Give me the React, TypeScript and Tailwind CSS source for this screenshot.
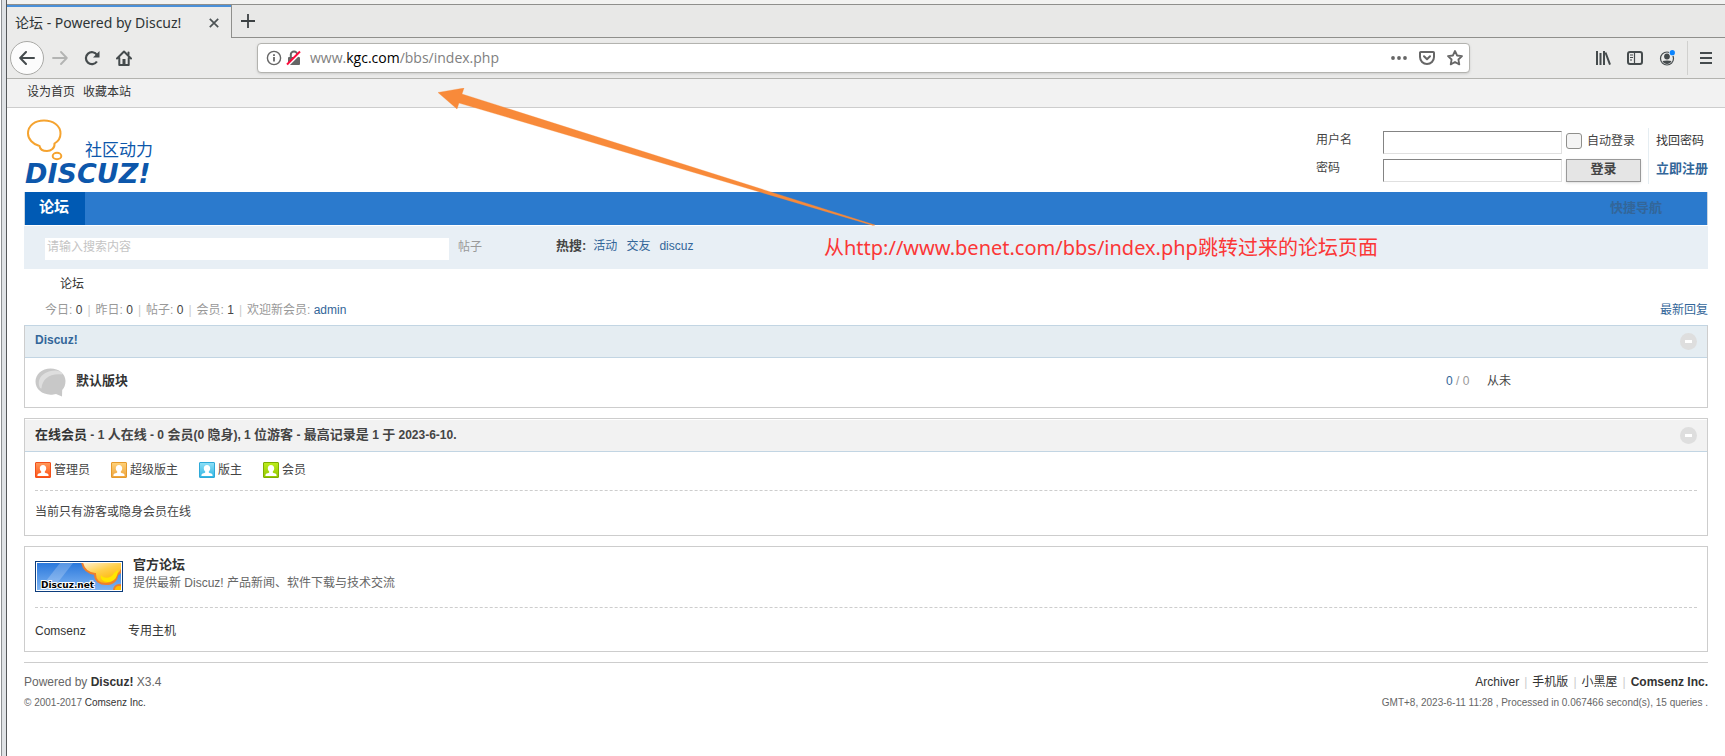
import { useState, type ReactNode } from "react";

const sans = "font-['Liberation_Sans','Noto_Sans_CJK_SC',sans-serif]";
const chrome = "font-['Noto_Sans','Noto_Sans_CJK_SC',sans-serif]";

function BrowserChrome() {
  return (
    <header className={`${chrome} text-[#2e3436]`}>
      <div className="h-1 bg-[#f2f2f1]" />
      <div className="flex h-[34px] border-t border-[#8f8f8c] bg-[#e8e8e7]">
        <div className="flex w-[225px] flex-col border-r border-[#8f8f8c] bg-[#ebebea]">
          <div className="h-[2px] bg-[#4a90d9]" />
          <div className="flex flex-1 items-center justify-between pr-3 pl-2">
            <span className="text-sm">论坛 - Powered by Discuz!</span>
            <button aria-label="Close tab" className="grid size-[10px] place-items-center">
              <svg width="10" height="10" viewBox="0 0 10 10" stroke="#4d5355" strokeWidth="1.7">
                <path d="M.8.8 9.2 9.2M9.2.8.8 9.2" />
              </svg>
            </button>
          </div>
        </div>
        <div className="flex flex-1 items-center border-b border-[#8f8f8c] pl-[9px]">
          <button aria-label="New tab">
            <svg width="14" height="14" viewBox="0 0 14 14" stroke="#3c4143" strokeWidth="1.8">
              <path d="M7 0v14M0 7h14" />
            </svg>
          </button>
        </div>
      </div>
      <div className="flex h-[41px] items-center border-b border-[#b3b3af] bg-[#ebebea] pl-[3px]">
        <button aria-label="Back" className="grid size-[34px] place-items-center rounded-full border border-[#a9a9a6] bg-[#fcfcfc]">
          <svg width="16" height="14" viewBox="0 0 16 14" fill="none" stroke="#454b4d" strokeWidth="2" strokeLinecap="round" strokeLinejoin="round">
            <path d="M15 7H1.5M7 1 1.2 7 7 13" />
          </svg>
        </button>
        <button aria-label="Forward" className="ml-2">
          <svg width="16" height="14" viewBox="0 0 16 14" fill="none" stroke="#b3b4b3" strokeWidth="1.8" strokeLinecap="round" strokeLinejoin="round">
            <path d="M1 7h13.5M9 1l5.8 6L9 13" />
          </svg>
        </button>
        <button aria-label="Reload" className="ml-4">
          <svg width="16" height="16" viewBox="0 0 16 16" fill="none" stroke="#454b4d" strokeWidth="2.2">
            <path d="M12.9 11.5A6 6 0 1 1 13 5" />
            <path d="M15.5 1v6.5H9Z" fill="#454b4d" stroke="none" />
          </svg>
        </button>
        <button aria-label="Home" className="ml-4">
          <svg width="16" height="16" viewBox="0 0 16 16" fill="none" stroke="#454b4d" strokeWidth="2" strokeLinejoin="round" strokeLinecap="round">
            <path d="M1 8.5 8 1.5l7 7M3.3 8v7h9.4V8" />
            <path d="M6.5 9h3v6h-3z" fill="#454b4d" stroke="none" />
            <path d="M12.5 2.5v2" />
          </svg>
        </button>
        <div className="ml-[125px] flex h-[30px] flex-1 items-center rounded border border-[#b3b3af] bg-white px-2 shadow-sm">
          <svg width="16" height="16" viewBox="0 0 16 16" fill="none" stroke="#666" strokeWidth="1.4" aria-hidden>
            <circle cx="8" cy="8" r="6.6" />
            <path d="M8 7v4.6M8 4.2v1.7" strokeWidth="1.8" />
          </svg>
          <svg width="16" height="16" viewBox="0 0 16 16" className="ml-1" aria-hidden>
            <path d="M4.8 7V4.6a3.2 3.2 0 0 1 6.4 0V7" fill="none" stroke="#666" strokeWidth="2" />
            <rect x="2" y="7" width="12" height="8" rx="1" fill="#666" />
            <path d="M2.5 15 15 2.5" stroke="#fff" strokeWidth="2" />
            <path d="M1 14.5 14 1.5" stroke="#ff0b3b" strokeWidth="2" />
          </svg>
          <p className="ml-2 flex-1 font-['Open_Sans',sans-serif] text-sm text-[#808080]">
            www.<span className="text-black">kgc.com</span>/bbs/index.php
          </p>
          <div className="flex items-center gap-3">
            <button aria-label="Page actions">
              <svg width="16" height="16" viewBox="0 0 16 16" fill="#666">
                <circle cx="2" cy="8" r="1.9" />
                <circle cx="8" cy="8" r="1.9" />
                <circle cx="14" cy="8" r="1.9" />
              </svg>
            </button>
            <button aria-label="Save to Pocket">
              <svg width="16" height="16" viewBox="0 0 16 16" fill="none" stroke="#666" strokeWidth="2" strokeLinecap="round" strokeLinejoin="round">
                <path d="M1.8 2h12.4a.8.8 0 0 1 .8.8V7a7 7 0 0 1-14 0V2.800a.8.8 0 0 1 .8-.8Z" />
                <path d="m5 6.300 3 3 3-3" />
              </svg>
            </button>
            <button aria-label="Bookmark this page" className="-mr-[2px]">
              <svg width="16" height="16" viewBox="0 0 16 16" fill="none" stroke="#666" strokeWidth="1.8" strokeLinejoin="round">
                <path d="m8 1 2.100 4.500 4.900.6-3.600 3.400.9 4.900L8 12l-4.300 2.400.9-4.900L1 6.100l4.900-.6Z" />
              </svg>
            </button>
          </div>
        </div>
        <div className="ml-[125px] flex items-center gap-4 pr-[11px]">
          <button aria-label="Library">
            <svg width="16" height="16" viewBox="0 0 16 16" fill="none" stroke="#454b4d" strokeWidth="2">
              <path d="M2 1v14M5.500 3v12M9 1v14M10.500 2.500l4.500 12.200" />
            </svg>
          </button>
          <button aria-label="Sidebars">
            <svg width="16" height="16" viewBox="0 0 16 16" fill="none" stroke="#454b4d">
              <rect x="1" y="2" width="14" height="12" rx="2" strokeWidth="2" />
              <path d="M7.500 2v12M3 5h3M3 7.500h3M3 10h2" strokeWidth="1.200" />
            </svg>
          </button>
          <button aria-label="Account">
            <svg width="16" height="16" viewBox="0 0 16 16">
              <circle cx="8" cy="8.500" r="6.500" fill="none" stroke="#454b4d" strokeWidth="1.200" />
              <circle cx="8" cy="6.500" r="2.900" fill="#454b4d" />
              <path d="M3.500 11c2.500-.8 6.500-.8 9 0-1 2.300-2.600 3-4.500 3s-3.500-.7-4.500-3Z" fill="#454b4d" />
              <circle cx="13.300" cy="2.700" r="3.300" fill="#ebebea" />
              <circle cx="13.300" cy="2.700" r="2.600" fill="#0a84ff" />
            </svg>
          </button>
          <div className="-ml-1 flex h-[34px] items-center border-l border-[#d0d0ce] pl-[10px]">
            <button aria-label="Open menu">
              <svg width="16" height="16" viewBox="0 0 16 16" stroke="#454b4d" strokeWidth="2">
                <path d="M2 3h12M2 8h12M2 13h12" />
              </svg>
            </button>
          </div>
        </div>
      </div>
    </header>
  );
}

function Logo() {
  return (
    <a href="#home" aria-label="Discuz!">
      <svg width="132" height="74" viewBox="0 0 132 74">
        <path
          d="M14.500 28C8 26.500 3 21 3 15.500 3 7.500 10 2.500 19 2.500S35.500 7.500 35.500 15.500c0 4-2.500 8-6 10 .5 4.500-3.500 7.500-7.500 7.500-4.500 0-7-2-7.500-5Z"
          fill="none"
          stroke="#f5a32f"
          strokeWidth="2"
        />
        <ellipse cx="32" cy="38" rx="4.300" ry="3.200" fill="none" stroke="#f5a32f" strokeWidth="2" />
        <text x="60" y="38" fontSize="17" fill="#0d57ab" fontFamily="'Noto Sans CJK SC', sans-serif">
          社区动力
        </text>
        <text x="0" y="65" fontSize="27" fontWeight="700" fontStyle="italic" fill="#0d57ab" fontFamily="'DejaVu Sans', sans-serif">
          DISCUZ!
        </text>
      </svg>
    </a>
  );
}

const inputClass = "h-[23px] w-[179px] border border-t-[#848484] border-r-[#e0e0e0] border-b-[#e0e0e0] border-l-[#848484] bg-white px-1 outline-none";

function LoginForm() {
  return (
    <form className="flex" onSubmit={(e) => e.preventDefault()}>
      <div className="grid grid-cols-[67px_179px_75px] content-start gap-y-[5px] pt-[3px]">
        <label htmlFor="user" className="leading-[19px]">用户名</label>
        <input id="user" type="text" className={inputClass} />
        <label className="ml-1 flex h-[19px] items-center gap-[5px] whitespace-nowrap">
          <input type="checkbox" className="size-4 appearance-none rounded-[3px] border border-[#8f8f8c] bg-[#f4f4f4]" />
          自动登录
        </label>
        <label htmlFor="pass" className="leading-[19px]">密码</label>
        <input id="pass" type="password" className={inputClass} />
        <button className="ml-1 h-[23px] w-[75px] border border-[#999] bg-[#e5e5e5] pb-1 text-[13px] font-bold leading-4 shadow-sm">登录</button>
      </div>
      <div className="ml-[11px] flex h-14 flex-col gap-[10px] border-l border-[#e5edf2] pt-1 pl-[7px]">
        <a href="#lost" className="leading-[18px] text-[#333]">找回密码</a>
        <a href="#register" className="text-[13px] font-bold leading-[18px] text-[#369]">立即注册</a>
      </div>
    </form>
  );
}

function Toggle({ onClick }: { onClick: () => void }) {
  return (
    <button aria-label="收起/展开" onClick={onClick} className="grid size-[17px] place-items-center rounded-full bg-[#dedede]">
      <span className="h-[3px] w-[7px] bg-white" />
    </button>
  );
}

function Panel({ title, tone, bar, children }: { title: ReactNode; tone: string; bar: string; children: ReactNode }) {
  const [open, setOpen] = useState(true);
  return (
    <section className={`mb-[10px] border border-[#cdcdcd] ${tone}`}>
      <div className={`flex items-center justify-between border-b border-b-[#c2d5e3] px-[10px] ${bar}`}>
        {title}
        <Toggle onClick={() => setOpen(!open)} />
      </div>
      {open && <div className="bg-white">{children}</div>}
    </section>
  );
}

/* Chinese runs are set one size larger than the Latin text around them. */
function MixedText({ text }: { text: string }) {
  return (
    <>
      {text.split(/([\u4e00-\u9fff]+)/).map((run, i) =>
        i % 2 ? <span key={i} className="text-[13px]">{run}</span> : run,
      )}
    </>
  );
}

const roles = [
  { id: "admin", name: "管理员", edge: "#f2501c", from: "#ff9a5c", to: "#ff5214" },
  { id: "super", name: "超级版主", edge: "#e59a2c", from: "#ffd27a", to: "#eda33c" },
  { id: "mod", name: "版主", edge: "#2fa9d8", from: "#8fe0f7", to: "#2fb5e3" },
  { id: "member", name: "会员", edge: "#7fae00", from: "#bdec1c", to: "#93c800" },
];

function RoleIcon({ id, edge, from, to }: { id: string; edge: string; from: string; to: string }) {
  return (
    <svg width="16" height="16" viewBox="0 0 16 16" aria-hidden>
      <linearGradient id={id} x2="0" y2="1">
        <stop offset="0" stopColor={from} />
        <stop offset="1" stopColor={to} />
      </linearGradient>
      <rect x=".5" y=".5" width="15" height="15" rx=".5" fill={`url(#${id})`} stroke={edge} />
      <path d="M8 3c2 0 3.200 1.300 3.200 3.200 0 1.500-.6 2.500-1.400 3.200v1c.8.700 2.500.8 3.300 1.600.4.400.5 1 .5 2H2.400c0-1 .1-1.600.5-2 .8-.8 2.500-.9 3.300-1.600v-1C5.400 8.700 4.800 7.700 4.800 6.200 4.800 4.300 6 3 8 3Z" fill="#fff" />
    </svg>
  );
}

function Banner() {
  return (
    <svg width="88" height="31" viewBox="0 0 88 31" aria-label="Discuz.net">
      <linearGradient id="sky" x2="0" y2="1">
        <stop offset="0" stopColor="#2a78dc" />
        <stop offset="1" stopColor="#7fb4f2" />
      </linearGradient>
      <linearGradient id="sun" x2=".6" y2="1">
        <stop offset="0" stopColor="#fff2dc" />
        <stop offset=".5" stopColor="#ffcf4a" />
        <stop offset="1" stopColor="#ffb400" />
      </linearGradient>
      <clipPath id="frame"><rect x="2" y="2" width="84" height="27" /></clipPath>
      <rect width="88" height="31" fill="#0c3c7c" />
      <rect x="1" y="1" width="86" height="29" fill="#fff" />
      <g clipPath="url(#frame)">
        <rect x="2" y="2" width="84" height="27" fill="url(#sky)" />
        <path d="M25 2h13L17 29H4Z" fill="#fff" opacity=".22" />
        <path d="M47 1c1 6 5 11 13 12 0 7 5 10 11 10 7 0 11-4 11-9 2-1 4-3 5-6V1Z" fill="url(#sun)" stroke="#ee7f2e" strokeWidth="2" />
        <path d="M66 14c2 4 10 4 13-2l4-3c0 7-4 12-10 12-5 0-8-3-7-7Z" fill="#ffe600" />
        <circle cx="84" cy="29" r="5" fill="#ffc000" stroke="#ee7f2e" strokeWidth="2" />
      </g>
      <text x="6" y="27" fontSize="9" fontWeight="700" fill="#000" stroke="#fff" strokeWidth="2" paintOrder="stroke" fontFamily="'DejaVu Sans', sans-serif">
        Discuz.net
      </text>
    </svg>
  );
}

function ForumIcon() {
  return (
    <svg width="31" height="29" viewBox="0 0 31 29" aria-hidden>
      <path d="M15.500.5C24 .5 30.500 6 30.500 13c0 4-1.200 7-3.300 9L27 28.500 21 26c-1.600.5-3.300.7-5.500.7C7 26.700.5 21 .5 13.600S7 .5 15.500.5Z" fill="#c8c8c8" />
      <path d="M5 20C1 11 8 3 20 2.500 27 3 28 6 27 6.500 15 5 7 11 6.500 20.500Z" fill="#dedede" />
    </svg>
  );
}

const stats = [
  ["今日", "0"],
  ["昨日", "0"],
  ["帖子", "0"],
  ["会员", "1"],
];

function Bar() {
  return <span className="mx-[5px] text-[#ccc]">|</span>;
}

function Annotation() {
  return (
    <>
      <svg className="pointer-events-none absolute top-[88px] left-[438px]" width="440" height="138" viewBox="0 0 440 138" aria-hidden>
        <path d="M0 4.500 26 0 24 6 437 137 435 137.500 21 15 19 21Z" fill="#f88a3a" stroke="#f88a3a" strokeWidth=".3" />
      </svg>
      <p className="absolute top-[234px] left-[824px] font-['Noto_Sans','Noto_Sans_CJK_SC',sans-serif] text-xl leading-7 whitespace-nowrap text-[#fb3737]">
        从http://www.benet.com/bbs/index.php跳转过来的论坛页面
      </p>
    </>
  );
}

export default function App() {
  return (
    <div className="relative flex min-h-screen bg-white">
      <div className="w-[7px] shrink-0 border-r border-[#55585a] bg-white pl-px">
        <div className="h-full border-l border-[#8e9194] bg-[#dfe2e5]" />
      </div>
      <div className="min-w-0 flex-1">
        <BrowserChrome />
        <div className={`${sans} text-xs text-[#444]`}>
          <nav className="flex h-[29px] gap-2 border-b border-[#cdcdcd] bg-[#f2f2f2] pl-5 leading-[27px] text-[#333]">
            <a href="#sethome">设为首页</a>
            <a href="#favorite">收藏本站</a>
          </nav>

          <div className="px-[17px]">
            <div className="flex h-[84px] justify-between">
              <div className="pt-[10px] pl-px">
                <Logo />
              </div>
              <div className="pt-5">
                <LoginForm />
              </div>
            </div>

            <nav className="flex h-[33px] items-stretch justify-between border-x border-[#cdd6df] bg-[#2b7acd]">
              <a href="#forum" className="w-[60px] bg-[#005ab4] pr-[2px] text-center text-[15px] leading-[29px] font-bold text-white">论坛</a>
              <a href="#quick" className="pr-[45px] text-[13px] leading-[31px] font-bold text-[#369]">快捷导航</a>
            </nav>

            <form className="mt-px flex h-[43px] items-start bg-[#e8eff5] pt-3 pl-[21px]" onSubmit={(e) => e.preventDefault()}>
              <input aria-label="搜索" placeholder="请输入搜索内容" className="h-[22px] w-[404px] bg-white px-[2px] pb-1 outline-none placeholder:text-[#c4c4c4]" />
              <a href="#type" className="ml-[9px] leading-[18px] text-[#999]">帖子</a>
              <p className="ml-[74px] flex gap-[9px] leading-4">
                <strong className="-mr-[2px] text-[13px]">热搜:</strong>
                <a href="#a" className="text-[#369]">活动</a>
                <a href="#b" className="text-[#369]">交友</a>
                <a href="#c" className="text-[#369]">discuz</a>
              </p>
            </form>

            <div className="h-[30px] pl-9 leading-[30px] text-[#333]">论坛</div>

            <div className="flex h-[26px] justify-between pt-[1px] pl-[21px] leading-5 text-[#999]">
              <p>
                {stats.map(([k, v]) => (
                  <span key={k}>
                    {k}: <em className="text-[#444] not-italic">{v}</em>
                    <Bar />
                  </span>
                ))}
                欢迎新会员: <a href="#admin" className="text-[#369]">admin</a>
              </p>
              <a href="#latest" className="text-[#369]">最新回复</a>
            </div>

            <Panel tone="border-t-[#c2d5e3] bg-[#e5edf2]" bar="h-8" title={<h2 className="pb-1 font-bold text-[#369]">Discuz!</h2>}>
              <table className="w-full">
                <tbody>
                  <tr className="h-[49px]">
                    <td className="w-[51px] pl-[10px]"><ForumIcon /></td>
                    <td className="pb-[3px] text-[13px] font-bold text-[#333]">默认版块</td>
                    <td className="w-[41px] pb-[3px] whitespace-nowrap text-[#999]">
                      <span className="text-[#369]">0</span> / 0
                    </td>
                    <td className="w-[220px] pb-[3px]">从未</td>
                  </tr>
                </tbody>
              </table>
            </Panel>

            <Panel
              tone="bg-[#f2f2f2]"
              bar="h-[33px] border-t border-t-white"
              title={
                <h2 className="pb-[2px] font-bold">
                  <span className="text-[13px] text-[#333]">在线会员</span>
                  <MixedText text=" - 1 人在线 - 0 会员(0 隐身), 1 位游客 - 最高记录是 1 于 2023-6-10." />
                </h2>
              }
            >
              <div className="px-[10px]">
                <ul className="flex h-[39px] gap-[21px] border-b border-dashed border-[#cdcdcd] pt-[10px]">
                  {roles.map((r) => (
                    <li key={r.id} className="flex h-4 items-center gap-[3px]">
                      <RoleIcon id={r.id} edge={r.edge} from={r.from} to={r.to} />
                      {r.name}
                    </li>
                  ))}
                </ul>
                <p className="h-11 leading-[42px]">当前只有游客或隐身会员在线</p>
              </div>
            </Panel>

            <section className="mb-[10px] border border-[#cdcdcd] px-[10px]">
              <div className="flex h-[61px] gap-[10px] border-b border-dashed border-[#cdcdcd] pt-[9px]">
                <div className="pt-[5px]"><Banner /></div>
                <div className="leading-[18px]">
                  <h3 className="text-[13px] font-bold text-[#333]">官方论坛</h3>
                  <p className="text-[#666]">提供最新 Discuz! 产品新闻、软件下载与技术交流</p>
                </div>
              </div>
              <div className="flex h-[43px] leading-[46px] text-[#333]">
                <a href="#comsenz" className="w-[93px]">Comsenz</a>
                <a href="#host">专用主机</a>
              </div>
            </section>

            <footer className="flex justify-between border-t border-[#cdcdcd] pt-[9px] text-[#666]">
              <div>
                <p className="leading-5">Powered by <strong className="text-[#333]">Discuz!</strong> X3.4</p>
                <p className="text-[10px] leading-[22px]">© 2001-2017 <a href="#inc" className="text-[#333]">Comsenz Inc.</a></p>
              </div>
              <div className="text-right">
                <p className="leading-5 text-[#333]">
                  <a href="#archiver">Archiver</a><Bar /><a href="#mobile">手机版</a><Bar /><a href="#dark">小黑屋</a><Bar />
                  <a href="#inc" className="font-bold">Comsenz Inc.</a>
                </p>
                <p className="text-[10px] leading-[22px]">GMT+8, 2023-6-11 11:28 , Processed in 0.067466 second(s), 15 queries .</p>
              </div>
            </footer>
          </div>
        </div>
      </div>
      <Annotation />
    </div>
  );
}
